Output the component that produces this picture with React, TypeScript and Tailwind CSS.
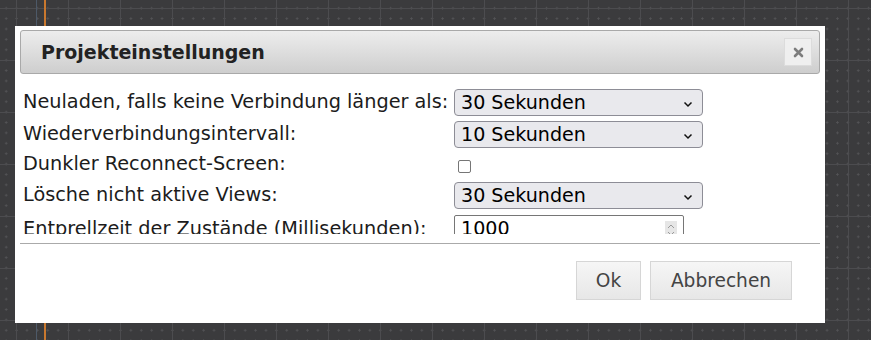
import React from "react";

const Chevron = () => (
  <svg width="10" height="7" viewBox="0 0 10 7" className="pointer-events-none absolute right-[9px] top-[11px]">
    <path d="M1.5 1.5l3.5 3.5 3.5-3.5" fill="none" stroke="#111" strokeWidth="1.5" />
  </svg>
);

const Select = ({ value }: { value: string }) => (
  <div className="relative h-[27px] w-[249px] rounded-[4px] border border-[#8d8d96] bg-[#e9e9ed] pl-[6px] text-[19.1px] leading-[25px] text-black">
    {value}
    <Chevron />
  </div>
);

const Row = ({ label, children, h = "h-[32px]" }: { label: string; children: React.ReactNode; h?: string }) => (
  <div className={`flex items-center ${h}`}>
    <div className="w-[431px] shrink-0 whitespace-nowrap text-[19.3px] text-[#1c1c1c]">{label}</div>
    {children}
  </div>
);

const App = () => {
  return (
    <div
      className="relative h-[340px] w-[871px] overflow-hidden bg-[#3b3b3d] bg-[linear-gradient(to_right,#4c4c4f_1px,transparent_1px),linear-gradient(to_bottom,#4c4c4f_1px,transparent_1px),radial-gradient(circle,#535356_0.9px,transparent_1.2px)] bg-[size:52px_52px,52px_52px,10.4px_10.4px] bg-[position:16px_8px,16px_8px,1px_3px] pl-[15px] pt-[26px]"
      style={{ fontFamily: '"DejaVu Sans", Verdana, sans-serif' }}
    >
      {/* canvas guide lines behind the dialog */}
      <div className="absolute left-[36px] top-0 h-full w-px bg-[#4d5968]" />
      <div className="absolute left-[44px] top-0 h-full w-[2px] bg-[#c9782e]" />

      <div className="relative flex h-[297px] w-[810px] flex-col bg-white px-[5px] pt-[4px]">
        {/* title bar */}
        <div className="flex h-[44px] items-center justify-between rounded-[3px] border border-[#a9a9a9] bg-[linear-gradient(to_bottom,#ededed,#cecece)] pl-[20px] pr-[7px]">
          <span className="text-[19px] font-bold text-[#222]">Projekteinstellungen</span>
          <button className="flex h-[28px] w-[28px] items-center justify-center border border-[#dcdcdc] bg-[#efefef]">
            <svg width="11" height="11" viewBox="0 0 11 11">
              <path d="M2 2l7 7M9 2l-7 7" stroke="#7d7d7d" strokeWidth="2.6" strokeLinecap="round" />
            </svg>
          </button>
        </div>

        {/* settings body */}
        <div className="h-[160px] overflow-hidden pl-[3px] pt-[12px]">
          <Row label="Neuladen, falls keine Verbindung länger als:">
            <Select value="30 Sekunden" />
          </Row>
          <Row label="Wiederverbindungsintervall:">
            <Select value="10 Sekunden" />
          </Row>
          <Row label="Dunkler Reconnect-Screen:" h="h-[29px]">
            <div className="ml-[4px] mt-[3px] h-[13px] w-[13px] rounded-[2px] border border-[#767676] bg-white" />
          </Row>
          <Row label="Lösche nicht aktive Views:">
            <Select value="30 Sekunden" />
          </Row>
          <div className="flex items-start">
            <div className="mt-[5px] w-[431px] shrink-0 whitespace-nowrap text-[19.3px] leading-[25px] text-[#1c1c1c]">
              Entprellzeit der Zustände (Millisekunden):
            </div>
            <div className="relative mt-[4px] h-[27px] w-[230px] rounded-[2px] border border-[#767676] bg-white pl-[6px] text-[19.1px] leading-[25px] text-black">
              1000
              <div className="absolute right-[6px] top-[5px] flex h-[18px] w-[12px] flex-col items-center justify-center gap-[2px] bg-[#e6e6e6]">
                <svg width="8" height="5" viewBox="0 0 8 5">
                  <path d="M1 4l3-3 3 3" fill="none" stroke="#9a9a9a" strokeWidth="1" />
                </svg>
                <svg width="8" height="5" viewBox="0 0 8 5">
                  <path d="M1 1l3 3 3-3" fill="none" stroke="#9a9a9a" strokeWidth="1" />
                </svg>
              </div>
            </div>
          </div>
        </div>

        {/* footer */}
        <div className="mt-[9px] flex justify-end gap-[9px] border-t border-[#aaaaaa] pr-[28px] pt-[17px]">
          <button className="h-[39px] w-[65px] border border-[#d6d6d6] bg-[linear-gradient(to_bottom,#f6f6f6,#e7e7e7)] text-[18.6px] text-[#444]">
            Ok
          </button>
          <button className="h-[39px] w-[142px] border border-[#d6d6d6] bg-[linear-gradient(to_bottom,#f6f6f6,#e7e7e7)] text-[18.6px] text-[#444]">
            Abbrechen
          </button>
        </div>
      </div>
    </div>
  );
};

export default App;
